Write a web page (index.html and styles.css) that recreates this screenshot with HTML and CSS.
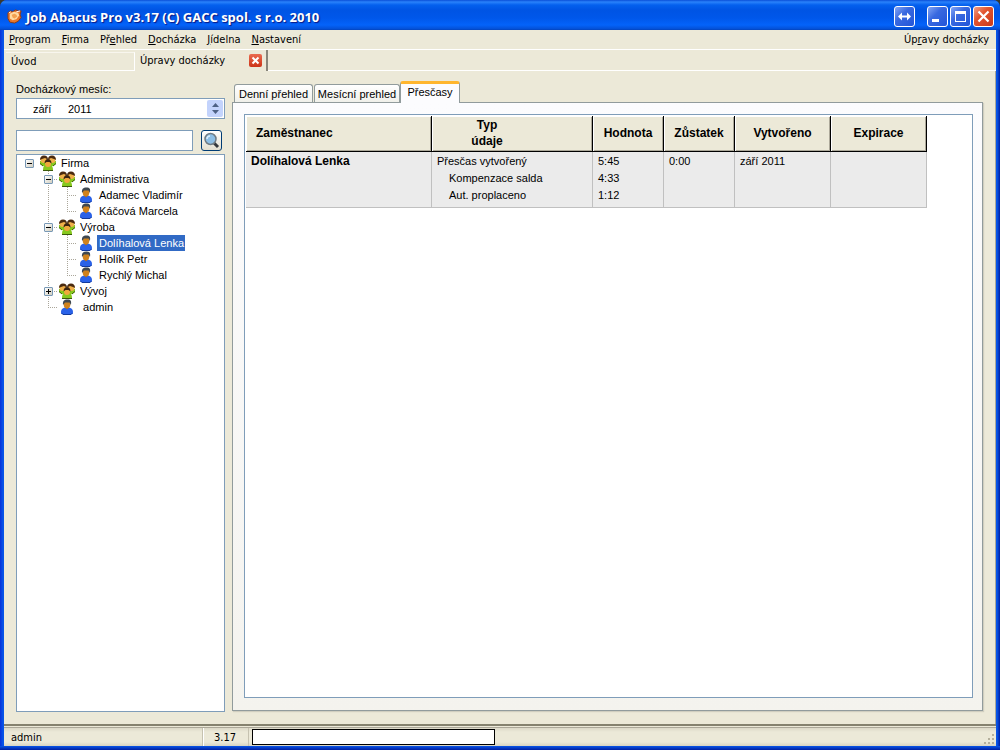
FILE: index.html
```html
<!DOCTYPE html>
<html lang="cs">
<head>
<meta charset="utf-8">
<title>Job Abacus Pro v3.17</title>
<link rel="stylesheet" href="styles.css">
</head>
<body>
<svg class="sprite" aria-hidden="true">
  <symbol id="group" viewBox="0 0 18 17">
    <path d="M1 6h6l2 5H4L1 9z M11 6h6v3l-3 2H9z" fill="#86c81e"/>
    <path d="M1 8.500l3 2.500M17 8.500L14 11" stroke="#3a5a0a" fill="none"/>
    <ellipse cx="4.800" cy="4.500" rx="3.300" ry="3.500" fill="#f0b04a"/>
    <path d="M1 5C1 2 2.500.5 5 .5S9 2 9 4.500L6 3 3 4z" fill="#4a2a10"/>
    <ellipse cx="13.200" cy="4.500" rx="3.300" ry="3.500" fill="#f0b04a"/>
    <path d="M9 4.500C9 2 10.500.5 13 .5S17 2 17 5l-2-1-3-1z" fill="#4a2a10"/>
    <path d="M4 15.500c0-4 1-6 5-6s5 2 5 6z" fill="#86c81e"/>
    <path d="M4 15.500h10" stroke="#3a5a0a"/>
    <ellipse cx="9" cy="8.500" rx="3" ry="3.500" fill="#f0a83c"/>
    <path d="M5.500 8.500C5.500 5.500 7 4 9 4s3.500 1.500 3.500 4.500L10.500 7h-3z" fill="#3c2410"/>
  </symbol>
  <symbol id="person" viewBox="0 0 14 16">
    <path d="M1 13.500C1 10 2.500 8.500 7 8.500s6 1.500 6 5c0 1-1 2-2 2H3c-1 0-2-1-2-2z" fill="#2a62e8"/>
    <path d="M1.500 14l1.500 1.500h8l1.500-1.500" stroke="#123a9c" fill="none"/>
    <path d="M5 8h4l-2 2.500z" fill="#a8620c"/>
    <ellipse cx="7" cy="5.500" rx="3.300" ry="4" fill="#d0821c"/>
    <path d="M3 6C2.500 2 4 .5 7.500.5S11.500 2 11 6L9.500 3.500 5 3.500z" fill="#3f4850"/>
  </symbol>
</svg>
<div class="window">
  <header class="titlebar">
    <svg class="app-icon" viewBox="0 0 16 16"><path d="M1 4l3-2 2 1 3-2 3 1 3 0-1 4 1 3-3 4-4 2-5-1-2-4z" fill="#e8762c" stroke="#8c3c16"/><path d="M3 5l4-2 5 1 1 3-3 4-4 1-3-2z" fill="#ffd9a0"/><path d="M5 6l3-1 2 1 1 2-3 2-2-1z" fill="#f3a04f"/><path d="M2 4l2-1M10 3l4-1" stroke="#fff"/></svg>
    <h1 class="title">Job Abacus Pro v3.17 (C) GACC spol. s r.o. 2010</h1>
    <button class="win-btn win-btn-wide" aria-label="Šířka"><svg viewBox="0 0 19 19"><path d="M3 9.500l4-4v3h5v-3l4 4-4 4v-3H7v3z" fill="#fff"/></svg></button>
    <button class="win-btn" aria-label="Minimalizovat"><svg viewBox="0 0 19 19"><path d="M4 12h7v3H4z" fill="#fff"/></svg></button>
    <button class="win-btn" aria-label="Maximalizovat"><svg viewBox="0 0 19 19"><path d="M4 4h11v11H4zM5 7v7h9V7z" fill="#fff" fill-rule="evenodd"/></svg></button>
    <button class="win-btn win-close" aria-label="Zavřít"><svg viewBox="0 0 19 19"><path d="M4.500 4.500l10 10m0-10l-10 10" stroke="#fff" stroke-width="2.200"/></svg></button>
  </header>
  <div class="frame">
    <nav class="menu">
      <button><u>P</u>rogram</button>
      <button><u>F</u>irma</button>
      <button>Př<u>e</u>hled</button>
      <button><u>D</u>ocházka</button>
      <button><u>J</u>ídelna</button>
      <button><u>N</u>astavení</button>
      <button class="menu-end">Úp<u>r</u>avy docházky</button>
    </nav>
    <div class="doc-tabs">
      <button class="doc-tab">Úvod</button>
      <div class="doc-tab-active">
        <button class="doc-tab-label">Úpravy docházky</button>
        <button class="tab-close" aria-label="Zavřít kartu"><svg viewBox="0 0 11 11"><path d="M2.500 2.500l6 6m0-6l-6 6" stroke="#fff" stroke-width="2"/></svg></button>
      </div>
      <div class="doc-rest"></div>
    </div>
    <main class="work">
      <aside class="side">
        <label class="field-label" for="month">Docházkový mesíc:</label>
        <div class="month-field">
          <input id="month" class="month" value="září">
          <input class="year" value="2011" aria-label="Rok">
          <div class="spin">
            <button aria-label="Další"><svg viewBox="0 0 7 4"><path d="M0 4L3.500 0 7 4z" fill="#4d6185"/></svg></button>
            <button aria-label="Předchozí"><svg viewBox="0 0 7 4"><path d="M0 0L3.500 4 7 0z" fill="#4d6185"/></svg></button>
          </div>
        </div>
        <div class="search">
          <input class="search-input" aria-label="Hledat">
          <button class="search-btn" aria-label="Hledat"><svg viewBox="0 0 17 17"><path d="M11 11l4 4" stroke="#34383c" stroke-width="3"/><circle cx="7.500" cy="7" r="5.500" fill="#8dbfe6" stroke="#6f7b84" stroke-width="1.500"/><path d="M4 7c0-2 1-3 3-3" stroke="#d9efff" stroke-width="1.500" fill="none"/></svg></button>
        </div>
        <div class="tree">
          <ul class="tree-root">
            <li>
              <div class="row"><span class="cell"><button class="toggle" aria-label="Sbalit"></button></span><svg class="ico-group"><use href="#group"/></svg><span class="name">Firma</span></div>
              <ul>
                <li>
                  <div class="row"><span class="cell"><button class="toggle" aria-label="Sbalit"></button></span><svg class="ico-group"><use href="#group"/></svg><span class="name">Administrativa</span></div>
                  <ul>
                    <li><div class="row"><span class="cell"></span><svg class="ico-person"><use href="#person"/></svg><span class="name">Adamec Vladimír</span></div></li>
                    <li><div class="row"><span class="cell"></span><svg class="ico-person"><use href="#person"/></svg><span class="name">Káčová Marcela</span></div></li>
                  </ul>
                </li>
                <li>
                  <div class="row"><span class="cell"><button class="toggle" aria-label="Sbalit"></button></span><svg class="ico-group"><use href="#group"/></svg><span class="name">Výroba</span></div>
                  <ul>
                    <li><div class="row"><span class="cell"></span><svg class="ico-person"><use href="#person"/></svg><span class="name selected">Dolíhalová Lenka</span></div></li>
                    <li><div class="row"><span class="cell"></span><svg class="ico-person"><use href="#person"/></svg><span class="name">Holík Petr</span></div></li>
                    <li><div class="row"><span class="cell"></span><svg class="ico-person"><use href="#person"/></svg><span class="name">Rychlý Michal</span></div></li>
                  </ul>
                </li>
                <li><div class="row"><span class="cell"><button class="toggle toggle-plus" aria-label="Rozbalit"></button></span><svg class="ico-group"><use href="#group"/></svg><span class="name">Vývoj</span></div></li>
                <li><div class="row"><span class="cell"></span><svg class="ico-person"><use href="#person"/></svg><span class="name">&nbsp;admin</span></div></li>
              </ul>
            </li>
          </ul>
        </div>
      </aside>
      <section class="detail">
        <div class="tabs" role="tablist">
          <button class="tab tab-day" role="tab">Denní přehled</button>
          <button class="tab tab-month" role="tab">Mesícní prehled</button>
          <button class="tab tab-active" role="tab" aria-selected="true">Přesčasy</button>
        </div>
        <div class="pane">
          <div class="grid">
            <table>
              <colgroup><col class="c-name"><col class="c-type"><col class="c-value"><col class="c-value"><col class="c-date"><col class="c-date"></colgroup>
              <thead>
                <tr><th class="left">Zaměstnanec</th><th class="type">Typ<br>údaje</th><th>Hodnota</th><th>Zůstatek</th><th>Vytvořeno</th><th>Expirace</th></tr>
              </thead>
              <tbody>
                <tr><td class="who">Dolíhalová Lenka</td><td>Přesčas vytvořený</td><td>5:45</td><td>0:00</td><td>září 2011</td><td></td></tr>
                <tr><td></td><td class="sub">Kompenzace salda</td><td>4:33</td><td></td><td></td><td></td></tr>
                <tr><td></td><td class="sub">Aut. proplaceno</td><td>1:12</td><td></td><td></td><td></td></tr>
              </tbody>
            </table>
          </div>
        </div>
      </section>
    </main>
    <footer class="status">
      <span class="status-user">admin</span>
      <span class="status-ver">3.17</span>
      <span class="status-bar"></span>
      <svg class="grip" viewBox="0 0 12 12"><path d="M9 1h2v2H9zM5 5h2v2H5zM9 5h2v2H9zM1 9h2v2H1zM5 9h2v2H5zM9 9h2v2H9z" fill="#b5b09c"/></svg>
    </footer>
  </div>
</div>
</body>
</html>
```
FILE: styles.css
```css
* { box-sizing: border-box; }
body {
  margin: 0;
  background: #3a3a30;
  color: #000;
  font: 11px/16px "Liberation Sans", Arial, sans-serif;
}
button, input { font: inherit; color: inherit; margin: 0; padding: 0; border: 0; background: none; }
ul { list-style: none; margin: 0; padding: 0; }
svg { display: block; }
.sprite { display: none; }

.window {
  display: flex;
  flex-direction: column;
  height: 100vh;
  border-radius: 7px 7px 0 0;
  background:
    linear-gradient(#0855e8, #001ea0) bottom / 100% 4px no-repeat,
    linear-gradient(90deg, #0831d9 0, #0855e8 3px, #0855e8 calc(100% - 3px), #001ea0 100%);
  overflow: hidden;
}
.titlebar {
  display: flex;
  align-items: center;
  gap: 2px;
  height: 30px;
  padding: 3px 6px 0 7px;
  background: linear-gradient(#0a4fd8 0, #2a82fb 2px, #0460ee 5px, #0054e4 10px, #0057ea 18px, #0463fa 25px, #0450d6 29px, #0341b8 30px);
}
.app-icon { width: 15px; height: 15px; }
.title {
  flex: 1;
  margin: 0 0 0 2px;
  color: #fff;
  font: bold 13px/16px "Open Sans", "Noto Sans", sans-serif;
  text-shadow: 1px 1px 1px #0a1883;
}
.win-btn {
  width: 21px;
  height: 21px;
  border: 1px solid #fff;
  border-radius: 3px;
  background: linear-gradient(135deg, #83a5f5 0, #3969e0 40%, #2255d8 100%);
}
.win-btn-wide { margin-right: 10px; }
.win-close { background: linear-gradient(135deg, #f0a088 0, #e2542f 40%, #c8391a 100%); }

.frame {
  flex: 1;
  display: flex;
  flex-direction: column;
  min-height: 0;
  margin: 0 4px 4px;
  background: #ece9d8;
}
.menu, .doc-tabs, .status { font-family: "DejaVu Sans Condensed", "Noto Sans", sans-serif; }
.menu {
  display: flex;
  align-items: center;
  gap: 11px;
  height: 20px;
  padding: 1px 7px 0 5px;
  border-bottom: 1px solid #fff;
}
.menu u { text-underline-offset: 1px; }
.menu-end { margin-left: auto; }

.doc-tabs { display: flex; height: 21px; padding-left: 2px; }
.doc-tab {
  width: 129px;
  margin-top: 2px;
  padding-left: 5px;
  text-align: left;
  border: 1px solid #fff;
  border-top-color: #f8f6ee;
  border-left: 0;
}
.doc-tab-active {
  display: flex;
  align-items: center;
  width: 133px;
  padding-left: 5px;
  border-right: 2px solid #88867a;
}
.doc-tab-label { flex: 1; text-align: left; white-space: nowrap; }
.tab-close {
  width: 13px;
  height: 13px;
  margin-right: 4px;
  padding: 1px;
  border-radius: 2px;
  background: linear-gradient(#ea6b50, #cc3417);
}
.doc-rest { flex: 1; border-bottom: 1px solid #fff; }

.work {
  flex: 1;
  display: flex;
  gap: 7px;
  min-height: 0;
  padding: 9px 12px 12px;
  border-right: 1px solid #aca899;
}
.side { display: flex; flex-direction: column; width: 209px; }
.field-label { height: 18px; line-height: 18px; }
.month-field {
  display: flex;
  align-items: center;
  height: 21px;
  padding: 0 1px 0 16px;
  border: 1px solid #7f9db9;
  background: #fff;
}
.month { width: 35px; }
.year { flex: 1; min-width: 0; }
.spin {
  display: flex;
  flex-direction: column;
  width: 16px;
  height: 17px;
  padding: 2px 0;
  border-radius: 2px;
  background: #c3d3fc;
}
.spin button { flex: 1; display: flex; align-items: center; justify-content: center; }
.spin svg { width: 7px; height: 4px; }
.search { display: flex; justify-content: space-between; margin-top: 11px; padding-right: 3px; }
.search-input { width: 177px; height: 21px; border: 1px solid #7f9db9; background: #fff; }
.search-btn {
  width: 21px;
  height: 21px;
  padding: 1px;
  border: 1px solid #003c74;
  border-radius: 3px;
  background: linear-gradient(#fff, #e3dfd0);
}
.tree {
  flex: 1;
  margin-top: 3px;
  padding: 0 0 0 3px;
  border: 1px solid #7f9db9;
  background: #fff;
}
.tree ul ul { margin-left: 19px; }
.tree ul ul > li {
  background: repeating-linear-gradient(#aaa69a 0 1px, transparent 1px 2px) 9px 0 / 1px 100% no-repeat;
}
.tree ul ul > li:last-child { background-size: 1px 8px; }
.row { display: flex; align-items: center; height: 16px; }
.cell { display: flex; align-items: center; width: 19px; height: 16px; padding: 1px 0 0 5px; }
.tree ul ul .cell {
  background: repeating-linear-gradient(90deg, #aaa69a 0 1px, transparent 1px 2px) 9px 8px / 10px 1px no-repeat;
}
.toggle {
  width: 9px;
  height: 9px;
  border: 1px solid #7898b5;
  border-radius: 1px;
  background: linear-gradient(#000, #000) center / 5px 1px no-repeat, linear-gradient(135deg, #fff, #d2cebf);
}
.toggle-plus {
  background: linear-gradient(#000, #000) center / 5px 1px no-repeat, linear-gradient(#000, #000) center / 1px 5px no-repeat, linear-gradient(135deg, #fff, #d2cebf);
}
.ico-group { width: 18px; height: 17px; }
.ico-person { width: 14px; height: 16px; margin: 0 2px; }
.name { margin-left: 2px; padding: 0 2px; white-space: nowrap; }
.selected { padding-right: 1px; background: #316ac5; color: #fff; }

.detail { flex: 1; display: flex; flex-direction: column; min-width: 0; padding-bottom: 1px; }
.tabs { display: flex; align-items: flex-end; height: 22px; padding-left: 2px; }
.tab {
  height: 18px;
  margin-right: 1px;
  border: 1px solid #919b9c;
  border-bottom: 0;
  border-radius: 3px 3px 0 0;
  background: linear-gradient(#fff, #f0f0ea);
  white-space: nowrap;
}
.tab-day { width: 79px; }
.tab-month { width: 86px; margin-right: 0; }
.tab-active {
  position: relative;
  width: 60px;
  height: 22px;
  margin-bottom: -1px;
  padding-bottom: 4px;
  border-top: 3px solid #ffb62e;
  background: #fcfcfe;
}
.pane {
  flex: 1;
  display: flex;
  min-height: 0;
  padding: 11px 9px 12px 11px;
  border: 1px solid #919b9c;
  background: linear-gradient(#fcfcfe, #f4f3ee);
  box-shadow: 1px 1px 1px #d0cebf;
}
.grid { flex: 1; padding: 1px; border: 1px solid #7f9db9; background: #fff; }
table { table-layout: fixed; width: 681px; border-collapse: separate; border-spacing: 0; }
.c-name { width: 186px; }
.c-type { width: 161px; }
.c-value { width: 71px; }
.c-date { width: 96px; }
th {
  height: 36px;
  padding: 0 0 2px;
  border: solid #000;
  border-width: 0 1px 1px 0;
  background: #ece9d8;
  box-shadow: inset 1px 1px #fff, inset -1px -1px #aca899;
  font-size: 12px;
  line-height: 16px;
}
th.left { padding-left: 10px; text-align: left; }
th.type { padding-right: 50px; }
td {
  height: 17px;
  padding: 0 5px;
  border-right: 1px solid #c0c0c0;
  background: #ebebeb;
  line-height: 17px;
}
tbody tr:first-child td { height: 18px; }
tbody tr:last-child td { height: 21px; padding-bottom: 3px; border-bottom: 1px solid #c0c0c0; }
.who { font-size: 12px; font-weight: bold; }
.sub { padding-left: 17px; }

.status {
  display: flex;
  align-items: stretch;
  height: 22px;
  padding: 2px 0 0;
  border-top: 2px solid #85826f;
  background: linear-gradient(#ece9d8 0 1px, #aca899 1px 2px, #dcd9c8 2px, #ece9d8 6px, #ece9d8 16px, #d8d4c2);
}
.status-user { width: 199px; padding: 2px 0 0 7px; border-right: 1px solid #c6c2b0; }
.status-ver { width: 46px; padding: 2px 0 0 10px; border-left: 1px solid #fff; border-right: 1px solid #c6c2b0; }
.status-bar { width: 243px; height: 16px; margin: 1px 0 0 3px; border: 1px solid #000; background: #fff; }
.grip { align-self: flex-end; width: 12px; height: 12px; margin: 0 1px 1px auto; }
```
